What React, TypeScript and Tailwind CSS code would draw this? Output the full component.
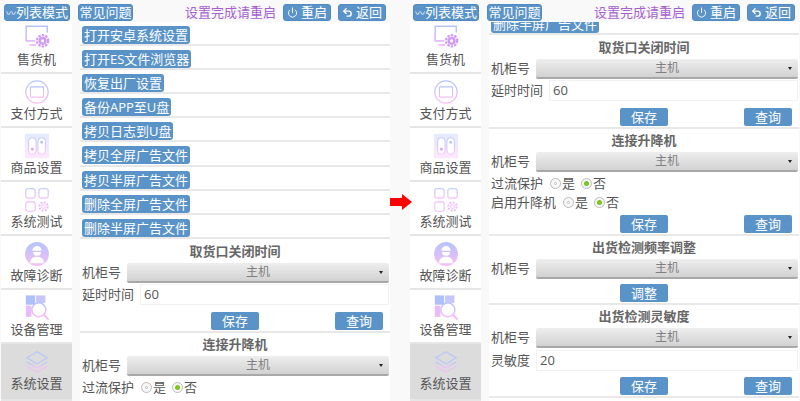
import { useId } from 'react';
import { Power, Undo2 } from 'lucide-react';

const font = "font-['Open_Sans','Noto_Sans_CJK_SC',sans-serif]";

function IconBox({ children }: { children: (paint: string) => React.ReactNode }) {
  const id = useId().replace(/[^a-zA-Z0-9]/g, '');
  return (
    <svg viewBox="0 0 30 30" className="w-[28px] h-[28px] shrink-0" fill="none">
      <defs>
        <linearGradient id={id} x1="0" y1="0" x2="0" y2="1">
          <stop offset="0" stopColor="#b4c4fb" />
          <stop offset="1" stopColor="#f8bdf6" />
        </linearGradient>
      </defs>
      {children(`url(#${id})`)}
    </svg>
  );
}

const icons: Record<string, React.ReactNode> = {
  vend: (
    <IconBox>
      {() => (
        <>
          <path d="M26 9V2.5H3.5V18H13" stroke="#b4c4fb" strokeWidth="1.6" />
          <path d="M3.5 10v8H13" stroke="#e3bcf9" strokeWidth="1.6" />
          <path d="M7 22.5h7" stroke="#efbcf8" strokeWidth="2" />
          <circle cx="21" cy="18" r="6" stroke="#d29cf5" strokeWidth="2.4" strokeDasharray="2.6 1.2" />
          <circle cx="21" cy="18" r="4.4" fill="#d29cf5" />
          <circle cx="21" cy="18" r="1.7" fill="#fff" />
        </>
      )}
    </IconBox>
  ),
  pay: (
    <IconBox>
      {(p) => (
        <>
          <circle cx="15" cy="15" r="12" stroke={p} strokeWidth="1.3" />
          <rect x="8" y="9.5" width="14" height="11" rx="1" stroke={p} strokeWidth="1.2" />
          <path d="M8 13h14" stroke={p} strokeWidth="1.5" />
          <path d="M10 17.5h4" stroke={p} strokeWidth="1" />
        </>
      )}
    </IconBox>
  ),
  goods: (
    <IconBox>
      {(p) => (
        <>
          <rect x="2" y="2" width="26" height="26" rx="1" fill={p} opacity="0.35" />
          <rect x="6" y="6" width="8" height="18" rx="4" fill="#fff" stroke={p} strokeWidth="1" />
          <rect x="16" y="6" width="8" height="18" rx="4" fill="#fff" stroke={p} strokeWidth="1" />
          <circle cx="10" cy="18.5" r="1.5" fill="#d9a6f7" />
          <circle cx="20" cy="11" r="1.5" fill="#b4c4fb" />
        </>
      )}
    </IconBox>
  ),
  test: (
    <IconBox>
      {(p) => (
        <>
          <rect x="3" y="3" width="10" height="10" rx="2" stroke={p} strokeWidth="1.2" />
          <rect x="17" y="3" width="10" height="10" rx="2" stroke={p} strokeWidth="1.2" />
          <rect x="3" y="17" width="10" height="10" rx="2" stroke="#efbcf8" strokeWidth="1.2" />
          <circle cx="22" cy="22" r="4.4" stroke="#efbcf8" strokeWidth="2.2" strokeDasharray="2 1.4" />
          <circle cx="22" cy="22" r="2" stroke="#efbcf8" strokeWidth="1" />
        </>
      )}
    </IconBox>
  ),
  fault: (
    <IconBox>
      {(p) => (
        <>
          <circle cx="15" cy="15" r="12.8" fill={p} />
          <path d="M10 11.5a5 5 0 0 1 10 0z" fill="#fff" />
          <path d="M10.8 12.8h8.4a4.2 4.2 0 0 1-8.4 0z" fill="#fff" />
          <path d="M7.5 25c.5-5.5 3.5-7 7.5-7s7 1.5 7.5 7z" fill="#fff" />
        </>
      )}
    </IconBox>
  ),
  device: (
    <IconBox>
      {(p) => (
        <>
          <rect x="3" y="1.5" width="10" height="10" fill="#aebffa" />
          <rect x="14" y="1.5" width="10" height="8" fill="#c7c6fa" />
          <rect x="3" y="12.5" width="6" height="12" fill="#e8bcf8" />
          <circle cx="17" cy="17" r="7.5" fill="#fff" stroke={p} strokeWidth="1.6" />
          <path d="M22.5 22.5l5 5" stroke="#f3bcf6" strokeWidth="2" />
        </>
      )}
    </IconBox>
  ),
  setting: (
    <IconBox>
      {(p) => (
        <>
          <path d="M15 4l11 6.5L15 17 4 10.5z" stroke="#b4c4fb" strokeWidth="1.1" />
          <path d="M4 15l11 6.5L26 15" stroke={p} strokeWidth="1.1" />
          <path d="M4 19.5L15 26l11-6.5" stroke="#f3bcf6" strokeWidth="1.1" />
        </>
      )}
    </IconBox>
  ),
};

const navItems = [
  { key: 'vend', label: '售货机', box: 'h-[52px] pt-[2px]' },
  { key: 'pay', label: '支付方式', box: 'h-[54px] pt-[4px]' },
  { key: 'goods', label: '商品设置', box: 'h-[54px] pt-[4px]' },
  { key: 'test', label: '系统测试', box: 'h-[54px] pt-[4px]' },
  { key: 'fault', label: '故障诊断', box: 'h-[54px] pt-[4px]' },
  { key: 'device', label: '设备管理', box: 'h-[54px] pt-[4px]' },
  { key: 'setting', label: '系统设置', box: 'h-[57px] pt-[4px]', active: true },
];

const actions = [
  '打开安卓系统设置',
  '打开ES文件浏览器',
  '恢复出厂设置',
  '备份APP至U盘',
  '拷贝日志到U盘',
  '拷贝全屏广告文件',
  '拷贝半屏广告文件',
  '删除全屏广告文件',
  '删除半屏广告文件',
];

function TopButton({ children, className }: { children: React.ReactNode; className: string }) {
  return (
    <div className={`h-[17px] rounded-[3px] bg-[#5a93c7] border border-[#4f8bc2] text-white text-[13px] leading-[15px] flex items-center justify-center whitespace-nowrap ${className}`}>
      {children}
    </div>
  );
}

function Select() {
  return (
    <div className="relative flex-1 h-[20px] rounded-[2px] bg-gradient-to-b from-[#eeeeee] to-[#d2d2d2] border-b-2 border-b-[#a8a8a8] text-[#808080] text-[12px] leading-[18px] text-center">
      主机
      <span className="absolute right-[6px] top-[8px] w-0 h-0 border-x-[2.5px] border-x-transparent border-t-[3px] border-t-[#222]" />
    </div>
  );
}

function Cabinet() {
  return (
    <div className="flex items-center h-[20px] text-[13px] text-[#555] pr-[1px]">
      <span className="w-[47px] shrink-0 pl-[2px]">机柜号</span>
      <Select />
    </div>
  );
}

function Field({ label, value, w, className }: { label: string; value: string; w: string; className: string }) {
  return (
    <div className={`flex items-center h-[21px] text-[13px] text-[#555] pr-[1px] ${className}`}>
      <span className={`${w} shrink-0 pl-[2px]`}>{label}</span>
      <div className="flex-1 h-[21px] bg-white border border-[#f2f2f2] pl-[3px] leading-[19px] text-[13px] text-[#555]">{value}</div>
    </div>
  );
}

function Radio({ on, label }: { on?: boolean; label: string }) {
  return (
    <span className="flex items-center">
      <span className="w-[11px] h-[11px] rounded-full border border-[#bbb] bg-[#f8f8f8] flex items-center justify-center mr-[1px]">
        <span className={on ? 'w-[5px] h-[5px] rounded-full bg-[#7cc61a]' : 'w-[3px] h-[3px] rounded-full border border-[#bbb]'} />
      </span>
      {label}
    </span>
  );
}

function RadioRow({ label, className }: { label: string; className?: string }) {
  return (
    <div className={`flex items-center text-[13px] text-[#555] pl-[2px] gap-[6px] h-[19px] ${className ?? ''}`}>
      <span className="mr-[1px]">{label}</span>
      <Radio label="是" />
      <Radio on label="否" />
    </div>
  );
}

function SmallButton({ children, last }: { children: string; last?: boolean }) {
  return (
    <div className={`w-[48px] h-[18px] rounded-[2px] bg-[#5a93c7] text-white text-[13px] leading-[18px] text-center ${last ? 'ml-[76px]' : ''}`}>
      {children}
    </div>
  );
}

function Heading({ children }: { children: string }) {
  return <div className="h-[23px] pt-[1px] flex items-center justify-center text-[13px] font-bold text-[#666]">{children}</div>;
}

function SaveQuery({ className }: { className: string }) {
  return (
    <div className={`flex pl-[131px] ${className}`}>
      <SmallButton>保存</SmallButton>
      <SmallButton last>查询</SmallButton>
    </div>
  );
}

function Section({ children, className }: { children: React.ReactNode; className: string }) {
  return <div className={`border-b-2 border-[#e8e8e8] ${className}`}>{children}</div>;
}

// scrolled = the second shot, where the list has moved up and only the last action still shows
function SettingsList({ scrolled }: { scrolled?: boolean }) {
  const rows = scrolled ? actions.slice(-1) : actions;
  return (
    <div className={scrolled ? '-mt-[11.2px]' : ''}>
      {rows.map((a) => (
        <div key={a} className="h-[24.1px] border-b-2 border-[#e8e8e8] pt-[4px] pl-[2px] flex items-start">
          <span className="h-[18px] px-[2px] rounded-[3px] bg-[#5a93c7] text-white text-[13px] leading-[18px] whitespace-nowrap">{a}</span>
        </div>
      ))}
      <Section className="h-[94px] pt-[1px]">
        <Heading>取货口关闭时间</Heading>
        <Cabinet />
        <Field label="延时时间" value="60" w="w-[60px]" className="mt-[1px]" />
        <SaveQuery className="mt-[7px]" />
      </Section>
      {scrolled ? (
        <>
          <Section className="h-[107px]">
            <Heading>连接升降机</Heading>
            <Cabinet />
            <RadioRow label="过流保护" className="mt-[2px]" />
            <RadioRow label="启用升降机" />
            <SaveQuery className="mt-[3px]" />
          </Section>
          <Section className="h-[69px]">
            <Heading>出货检测频率调整</Heading>
            <Cabinet />
            <div className="flex pl-[131px] mt-[5px]">
              <SmallButton>调整</SmallButton>
            </div>
          </Section>
          <Section className="h-[93px]">
            <Heading>出货检测灵敏度</Heading>
            <Cabinet />
            <Field label="灵敏度" value="20" w="w-[47px]" className="mt-[2px]" />
            <SaveQuery className="mt-[6px]" />
          </Section>
        </>
      ) : (
        <div>
          <Heading>连接升降机</Heading>
          <Cabinet />
          <RadioRow label="过流保护" className="mt-[2px]" />
        </div>
      )}
    </div>
  );
}

function Screen({ scrolled }: { scrolled?: boolean }) {
  return (
    <div className="w-[391px] h-[401px] shrink-0 flex flex-col overflow-hidden">
      <div className="h-[22px] shrink-0 flex items-center pt-[3px] pl-[4px]">
        <TopButton className="w-[66px]">
          <span className="text-[10px] leading-none">〰</span>列表模式
        </TopButton>
        <TopButton className="w-[55px] ml-[8px]">常见问题</TopButton>
        <span className="ml-[52px] w-[91px] text-[13px] text-[#a55fd0] whitespace-nowrap">设置完成请重启</span>
        <TopButton className="w-[48px] ml-[7px] gap-[3px]">
          <Power size={11} strokeWidth={2} />
          重启
        </TopButton>
        <TopButton className="w-[48px] ml-[7px] gap-[3px]">
          <Undo2 size={11} strokeWidth={3} />
          返回
        </TopButton>
      </div>
      <div className="flex flex-1 min-h-0">
        <div className="w-[71px] ml-[1px] shrink-0 flex flex-col">
          {navItems.map((n) => (
            <div
              key={n.key}
              className={`${n.box} shrink-0 flex flex-col items-center border-b-2 border-[#e6e6e6] text-[13px] leading-[16px] text-[#555] ${n.active ? 'bg-[#dcdcdc]' : 'bg-white'}`}
            >
              {icons[n.key]}
              <span className="-mt-[1px]">{n.label}</span>
            </div>
          ))}
        </div>
        <div className="w-[310px] ml-[8px] shrink-0 overflow-hidden bg-white">
          <SettingsList scrolled={scrolled} />
        </div>
      </div>
    </div>
  );
}

export default function App() {
  return (
    <div className={`relative w-[800px] h-[401px] overflow-hidden bg-[#f9f9f9] flex ${font}`}>
      <Screen />
      <div className="w-[18px] shrink-0" />
      <Screen scrolled />
      {/* red arrow between the two shots */}
      <svg viewBox="0 0 22 16" className="absolute left-[390px] top-[194px] w-[22px] h-[16px]">
        <path d="M0 4h12V0l10 8-10 8v-4H0z" fill="#ff0000" />
      </svg>
    </div>
  );
}
